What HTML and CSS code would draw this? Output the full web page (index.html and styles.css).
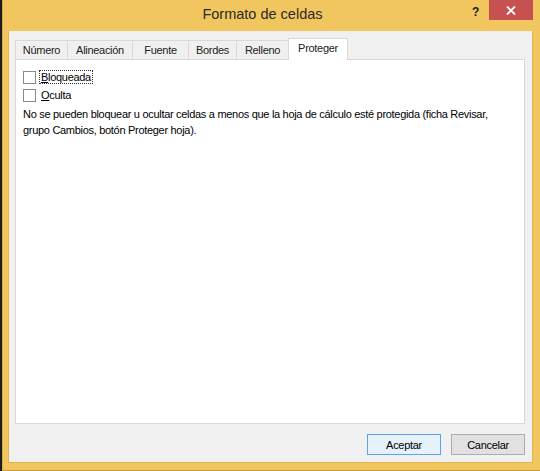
FILE: index.html
```html
<!DOCTYPE html>
<html lang="es">

<head>
    <meta charset="UTF-8">
    <title>Formato de celdas</title>
    <link rel="stylesheet" href="styles.css">
</head>

<body>
    <div class="window">
        <div class="titlebar">
            <div class="title">Formato de celdas</div>
            <div class="help">?</div>
            <div class="close">
                <svg width="10" height="9" viewBox="0 0 10 9">
                    <path d="M1 0.5 L9 8.5 M9 0.5 L1 8.5" stroke="#fff" stroke-width="1.8" />
                </svg>
            </div>
        </div>

        <div class="client">
            <div class="tabs">
                <div class="tab">Número</div>
                <div class="tab">Alineación</div>
                <div class="tab">Fuente</div>
                <div class="tab">Bordes</div>
                <div class="tab">Relleno</div>
                <div class="tab active">Proteger</div>
            </div>

            <div class="panel">
                <label class="check">
                    <span class="box"></span>
                    <span class="label focused"><u>B</u>loqueada</span>
                </label>
                <label class="check">
                    <span class="box"></span>
                    <span class="label"><u>O</u>culta</span>
                </label>
                <p class="note">No se pueden bloquear u ocultar celdas a menos que la hoja de cálculo esté protegida (ficha Revisar, grupo Cambios, botón Proteger hoja).</p>
            </div>

            <div class="buttons">
                <button class="default">Aceptar</button>
                <button>Cancelar</button>
            </div>
        </div>
    </div>
</body>

</html>
```

FILE: styles.css
```css
* {
    box-sizing: border-box;
}

body {
    margin: 0;
    background: #1c1c1c;
    font-family: "Segoe UI", "Liberation Sans", sans-serif;
    font-size: 11px;
    letter-spacing: -0.3px;
    color: #000;
}

.window {
    margin-left: 2px;
    width: 538px;
    height: 471px;
    background: #f2c65e;
    border-left: 1px solid #d9ab45;
    border-bottom: 1px solid #c99b3a;
    display: flex;
    flex-direction: column;
}

.titlebar {
    height: 31px;
    flex-shrink: 0;
    display: flex;
    align-items: flex-start;
}

.title {
    flex: 1;
    text-align: center;
    padding-left: 50px;
    padding-top: 6px;
    font-size: 14.5px;
    letter-spacing: 0;
    color: #2b2b2b;
}

.help {
    width: 7px;
    margin-top: 5px;
    margin-right: 10px;
    font-weight: bold;
    font-size: 12px;
    color: #1a1a1a;
}

.close {
    width: 44px;
    height: 20px;
    margin-right: 7px;
    background: #c75050;
    display: flex;
    align-items: center;
    justify-content: center;
}

.client {
    flex: 1;
    margin: 0 7px 7px 5px;
    background: #f0f0f0;
    border: 1px solid #e0b453;
    border-top: none;
    padding: 7px 7px 0 6px;
    display: flex;
    flex-direction: column;
}

.tabs {
    display: flex;
    align-items: flex-end;
    height: 21px;
    flex-shrink: 0;
}

.tab {
    height: 19px;
    line-height: 18px;
    text-align: center;
    border: 1px solid #d9d9d9;
    border-bottom: none;
    margin-right: -1px;
    background: #f0f0f0;
    color: #222;
}

.tab:nth-child(1) { width: 53px; }
.tab:nth-child(2) { width: 66px; }
.tab:nth-child(3) { width: 57px; }
.tab:nth-child(4) { width: 49px; }
.tab:nth-child(5) { width: 53px; }

.tab.active {
    width: 60px;
    height: 22px;
    line-height: 19px;
    background: #fff;
    position: relative;
    margin-bottom: -1px;
    z-index: 1;
}

.panel {
    height: 365px;
    flex-shrink: 0;
    background: #fff;
    border: 1px solid #d9d9d9;
    padding: 8px 7px 0 7px;
}

.check {
    display: flex;
    align-items: center;
    height: 18px;
}

.box {
    width: 13px;
    height: 13px;
    border: 1px solid #8a8a8a;
    background: #fff;
    margin-right: 3px;
}

.label {
    padding: 0 1px;
    border: 1px solid transparent;
}

.label.focused {
    border: 1px dotted #333;
}

.note {
    margin: 2px 0 0 0;
    line-height: 16px;
}

.buttons {
    display: flex;
    justify-content: flex-end;
    gap: 10px;
    margin-top: 10px;
}

button {
    width: 74px;
    height: 21px;
    font-family: inherit;
    font-size: 11px;
    letter-spacing: -0.3px;
    background: #e1e1e1;
    border: 1px solid #adadad;
    padding: 0;
    color: #000;
}

button.default {
    background: #e5f1fb;
    border-color: #5ea1e8;
}
```
